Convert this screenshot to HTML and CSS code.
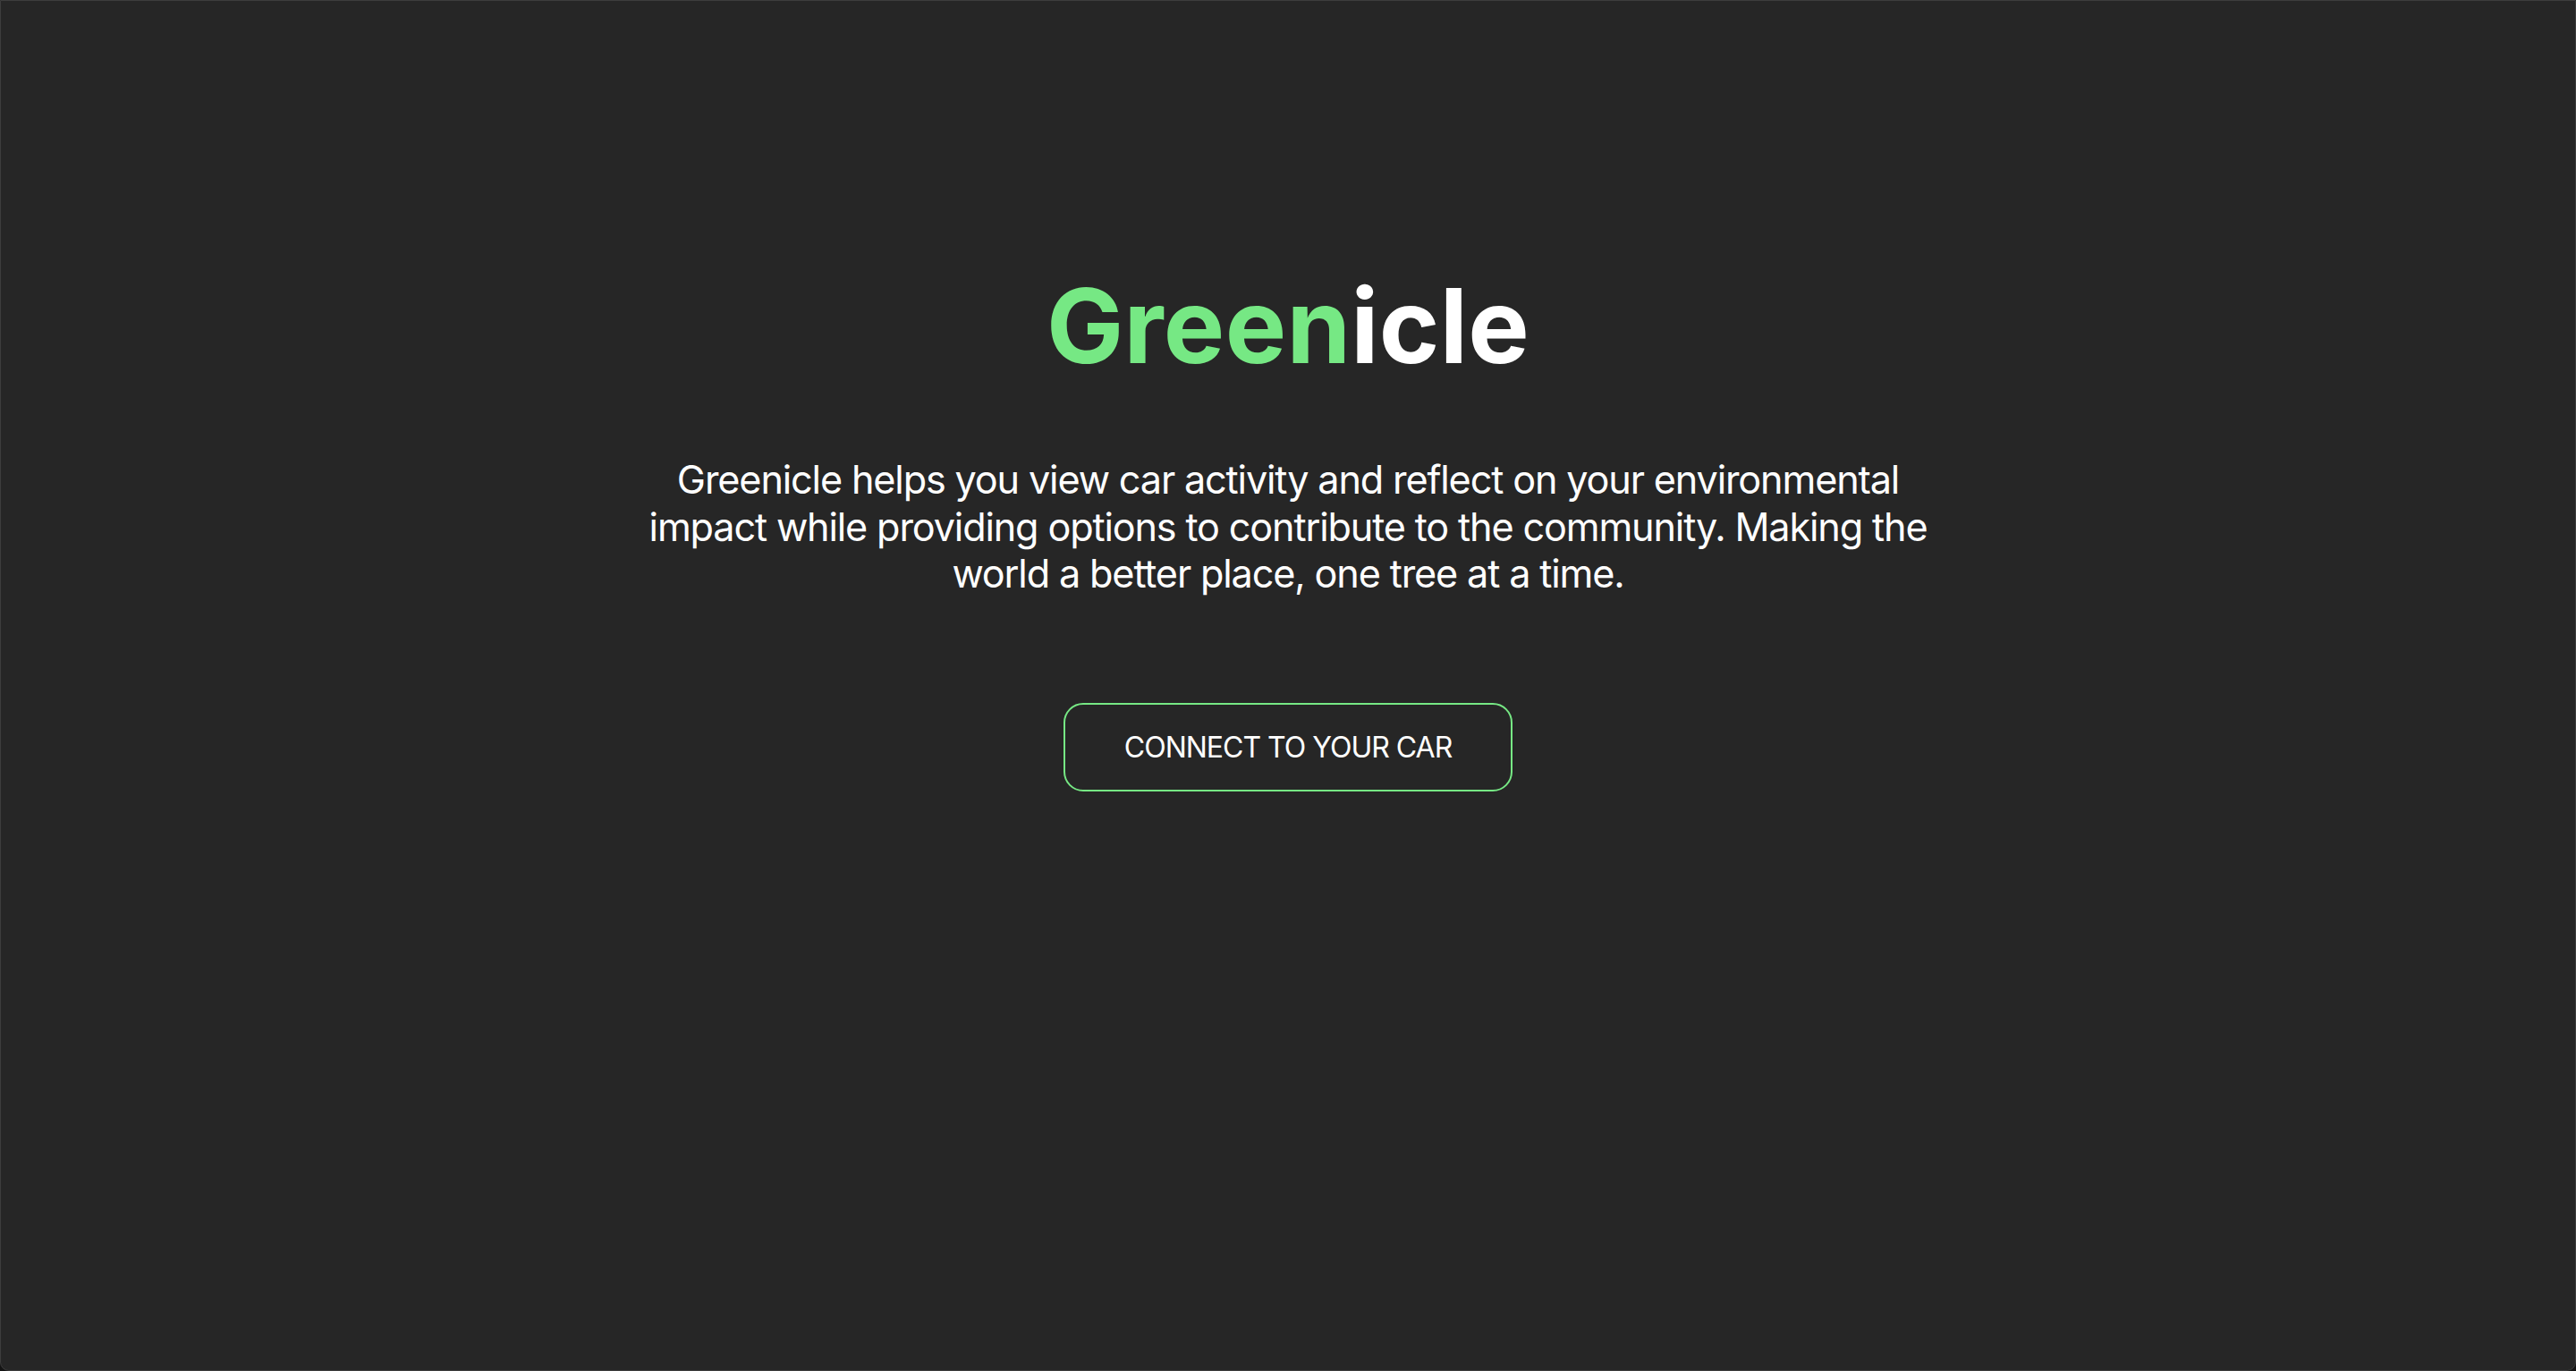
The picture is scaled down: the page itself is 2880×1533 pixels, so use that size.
FILE: index.html
```html
<!DOCTYPE html>
<html lang="en">
<head>
<meta charset="utf-8">
<title>Greenicle</title>
<link rel="stylesheet" href="styles.css">
</head>
<body>
<div class="window">
  <main class="hero">
    <h1 class="brand"><span class="brand-green">Green</span><span class="brand-white">icle</span></h1>
    <p class="lead">Greenicle helps you view car activity and reflect on your environmental impact while providing options to contribute to the community. Making the world a better place, one tree at a time.</p>
    <button class="connect" type="button">CONNECT TO YOUR CAR</button>
  </main>
</div>
</body>
</html>
```
FILE: styles.css
```css
html, body {
  margin: 0;
  padding: 0;
  background: #141414;
}
body {
  font-family: Inter, "Noto Sans", sans-serif;
  color: #ffffff;
}
.window {
  box-sizing: border-box;
  height: 100vh;
  background: #262626;
  border: 1px solid #3d3d3d;
  border-radius: 0 0 10px 10px;
  overflow: hidden;
}
.hero {
  display: flex;
  flex-direction: column;
  align-items: center;
  padding-top: 294px;
}
.brand {
  margin: 0;
  font-size: 115px;
  font-weight: 700;
  line-height: normal;
  letter-spacing: 0.3px;
}
.brand-green { color: #76e884; }
.brand-white { color: #ffffff; }
.lead {
  margin: 76px 0 0;
  max-width: 1440px;
  font-size: 43.2px;
  font-weight: 400;
  line-height: 52.5px;
  letter-spacing: -1.15px;
  text-align: center;
  color: #ffffff;
}
.connect {
  margin-top: 118px;
  padding: 28px 66px;
  background: transparent;
  border: 2px solid #76e884;
  border-radius: 22px;
  color: #ffffff;
  font-family: Inter, "Noto Sans", sans-serif;
  font-size: 32px;
  font-weight: 400;
  line-height: normal;
  letter-spacing: -1px;
  cursor: pointer;
}
```
